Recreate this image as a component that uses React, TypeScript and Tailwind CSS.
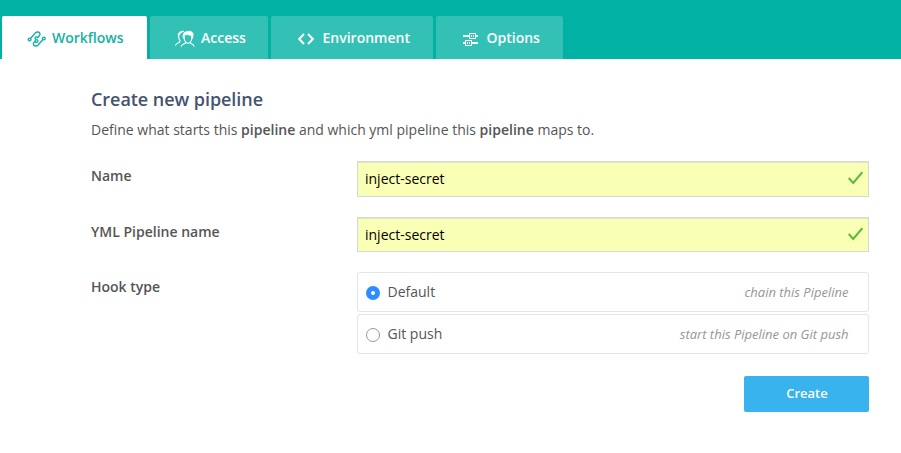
import type { ReactNode } from 'react';

function WorkflowIcon() {
  return (
    <svg width="19" height="16" viewBox="0 0 19 16" fill="none" stroke="currentColor" strokeWidth="1.4" strokeLinecap="round" strokeLinejoin="round">
      <circle cx="2.600" cy="8.500" r="1.400" />
      <circle cx="16.800" cy="7.500" r="1.400" />
      <path d="M3.700 7.300 8.300 2C10 .200 12.800.900 13 2.900c.1.800-.2 1.400-.7 1.900L10.800 6.500" />
      <path d="M15.700 8.700 11.100 14C9.400 15.800 6.600 15.100 6.400 13.100c-.1-.8.2-1.400.7-1.900L8.600 9.500" />
      <path d="M10.800 6.500C9.800 5.300 8.100 6 8.100 7.300c0 .8.500 1.200 1.500 1.300s1.400.700 1.300 1.500c-.2 1.200-1.500 1.600-2.500.8" />
    </svg>
  );
}

function AccessIcon() {
  return (
    <svg width="20" height="17" viewBox="0 0 20 17" fill="none" stroke="currentColor" strokeWidth="1.100" strokeLinecap="round" strokeLinejoin="round">
      <path d="M3.700 5.500c-.3 2.300.2 3.800 1.200 4.800.5 1.500-.4 2.200-1.800 2.700C1.700 13.500.8 14.300.6 15.500" />
      <path d="M3.600 6.800C2.200 3.600 4.500.8 9 1.300 6.300 2.200 5.600 3 5.200 4.100c-.8.300-1.300 1.200-1.600 2.700Z" fill="currentColor" strokeWidth=".8" />
      <path d="M9.200 6.500c-.2 2.900.5 4.800 1.700 5.900-.2 1.500-4.100 1.100-4.700 3.900M16.800 6.500c.2 2.900-.5 4.800-1.700 5.900.2 1.500 3.300 1.100 3.900 3.900M10.900 12.400c1.300 1 2.900 1 4.200 0" />
      <path d="M8.400 8.500C6.900 4.500 8.900 1.300 12.600 1.500c3.800-1.200 6.300 1.400 5.500 4.400L17.200 9 16.100 5.200c-1.900.4-3.100-.1-4-1.100-.7 1.100-2.500 1-2.900 1.800Z" fill="currentColor" strokeWidth=".6" />
    </svg>
  );
}

function CodeIcon() {
  return (
    <svg className="mt-[3px]" width="17" height="12" viewBox="0 0 17 12" fill="none" stroke="currentColor" strokeWidth="2">
      <path d="M6 1 1.200 6 6 11M10 1l4.800 5-4.800 5" />
    </svg>
  );
}

function OptionsIcon() {
  return (
    <svg className="mt-[5px]" width="15" height="14" viewBox="0 0 15 14" fill="none" stroke="currentColor" shapeRendering="crispEdges">
      <path d="M0 3h6M13 3h2M0 10h2M9 10h6" strokeWidth="2" />
      <path d="M6.500.5h6v5h-6zM2.500 7.500h6v5h-6zM8.500 2v2M10.500 2v2M4.500 9v2M6.500 9v2" />
    </svg>
  );
}

function Tab({ icon, label, className }: { icon: ReactNode; label: string; className: string }) {
  return (
    <button className={`flex h-[43px] items-center rounded-t-[2px] text-[14px] font-semibold ${className}`}>
      {icon}
      <span className="leading-[20px]">{label}</span>
    </button>
  );
}

function Field({ label, className }: { label: string; className: string }) {
  return (
    <div className={`flex ${className}`}>
      <label className="w-[266px] pt-[5px] text-[14px] leading-[20px] font-semibold">{label}</label>
      <div className="flex w-[512px] items-start justify-between border border-[#d5d9dc] bg-[#f9ffb5] pt-[7px] pr-[5px] pl-[7px] text-[14px] leading-[20px] text-black shadow-[inset_0_1px_1px_#e2e7bd]">
        <span>inject-secret</span>
        <svg className="mt-[2px]" width="15" height="14" viewBox="0 0 15 14" fill="none" stroke="#5dbb3c" strokeWidth="2">
          <path d="m.7 7 4.500 5L14.300 1.200" />
        </svg>
      </div>
    </div>
  );
}

function Hook({ label, hint, selected = false }: { label: string; hint: string; selected?: boolean }) {
  return (
    <div className="flex h-[40px] items-center rounded-[3px] border border-[#e5e5e5] pr-[19.500px] pl-[8px]">
      <span className={`mt-[2px] flex size-[14px] items-center justify-center rounded-full ${selected ? 'bg-[#2d8cff]' : 'border border-[#999]'}`}>
        {selected && <span className="size-[4px] rounded-full bg-white" />}
      </span>
      <span className="mb-px ml-[7.500px] text-[14px] leading-[20px]">{label}</span>
      <span className="ml-auto text-[13px] leading-[20px] text-[#969696] italic">{hint}</span>
    </div>
  );
}

export default function App() {
  return (
    <main className="h-[453px] w-[901px] overflow-hidden bg-white font-['Open_Sans','Noto_Sans',sans-serif] text-[#555]">
      <nav className="flex h-[59px] items-end gap-[3px] bg-[#00b1a4] pl-[2px] text-white">
        <Tab icon={<span className="mt-[3px]"><WorkflowIcon /></span>} label="Workflows" className="w-[145px] gap-[6px] bg-white pl-[25px] text-[#14b1a4]" />
        <Tab icon={<span className="mt-[2px]"><AccessIcon /></span>} label="Access" className="w-[118px] gap-[6px] bg-[#33c1b6] pl-[25px]" />
        <Tab icon={<CodeIcon />} label="Environment" className="w-[162px] gap-[8px] bg-[#33c1b6] pl-[26.500px]" />
        <Tab icon={<OptionsIcon />} label="Options" className="w-[127px] gap-[8.500px] bg-[#33c1b6] pl-[27px]" />
      </nav>
      <section className="w-[869px] pt-[28px] pl-[91px]">
        <h1 className="text-[18px] leading-[24px] font-semibold tracking-[-0.05px] text-[#44536f]">Create new pipeline</h1>
        <p className="mt-[9px] text-[14px] leading-[20px] whitespace-nowrap">
          Define what starts this <b className="font-semibold">pipeline</b> and which yml pipeline this <b className="font-semibold">pipeline</b> maps to.
        </p>
        <Field label="Name" className="mt-[21px] h-[36px]" />
        <Field label="YML Pipeline name" className="mt-[20px] h-[35px]" />
        <div className="mt-[20px] flex">
          <span className="w-[266px] pt-[5px] text-[14px] leading-[20px] font-semibold">Hook type</span>
          <div className="flex w-[512px] flex-col gap-[2px]">
            <Hook label="Default" hint="chain this Pipeline" selected />
            <Hook label="Git push" hint="start this Pipeline on Git push" />
          </div>
        </div>
        <button className="mt-[22px] ml-auto block h-[36px] w-[125px] rounded-[2px] bg-[#38b3ee] pl-px text-[13px] font-semibold text-white">Create</button>
      </section>
    </main>
  );
}
